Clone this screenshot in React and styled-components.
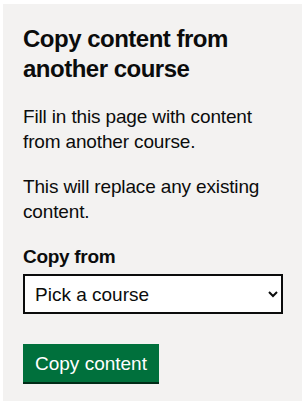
import styled, { createGlobalStyle } from 'styled-components';

const GlobalStyle = createGlobalStyle`
    body {
        margin: 0;
        background: #fff;
        font-family: "Liberation Sans", Arial, sans-serif;
        color: #0b0c0c;
    }
`;

const Panel = styled.aside`
    margin: 4px 4px 4px 3px;
    padding: 20px 20px 17px;
    background: #f3f2f1;
    box-sizing: border-box;
    height: 397px;
`;

const Heading = styled.h2`
    margin: 0 0 20px;
    font-size: 24px;
    line-height: 30px;
    font-weight: 700;
    letter-spacing: -0.5px;
`;

const Body = styled.p`
    margin: 0 0 20px;
    font-size: 19px;
    line-height: 25px;
    letter-spacing: -0.15px;
`;

const Label = styled.label`
    display: block;
    margin-bottom: 5px;
    font-size: 19px;
    line-height: 25px;
    font-weight: 700;
    letter-spacing: -0.3px;
`;

const Select = styled.select`
    display: block;
    width: 260px;
    height: 40px;
    margin: 0 0 30px;
    padding: 5px 6px;
    box-sizing: border-box;
    border: 2px solid #0b0c0c;
    border-radius: 0;
    background: #fff;
    color: #0b0c0c;
    font-family: inherit;
    font-size: 19px;
`;

const Button = styled.button`
    display: inline-block;
    padding: 8px 10px 7px;
    border: 2px solid transparent;
    border-radius: 0;
    background: #00703c;
    box-shadow: 0 2px 0 #002d18;
    color: #fff;
    font-family: inherit;
    font-size: 19px;
    line-height: 19px;
    cursor: pointer;
`;

function App() {
    return (
        <>
            <GlobalStyle />
            <Panel>
                <Heading>Copy content from another course</Heading>
                <Body>Fill in this page with content from another course.</Body>
                <Body>This will replace any existing content.</Body>
                <Label htmlFor="copy-from">Copy from</Label>
                <Select id="copy-from" defaultValue="">
                    <option value="">Pick a course</option>
                </Select>
                <Button type="button">Copy content</Button>
            </Panel>
        </>
    );
}

export default App;
